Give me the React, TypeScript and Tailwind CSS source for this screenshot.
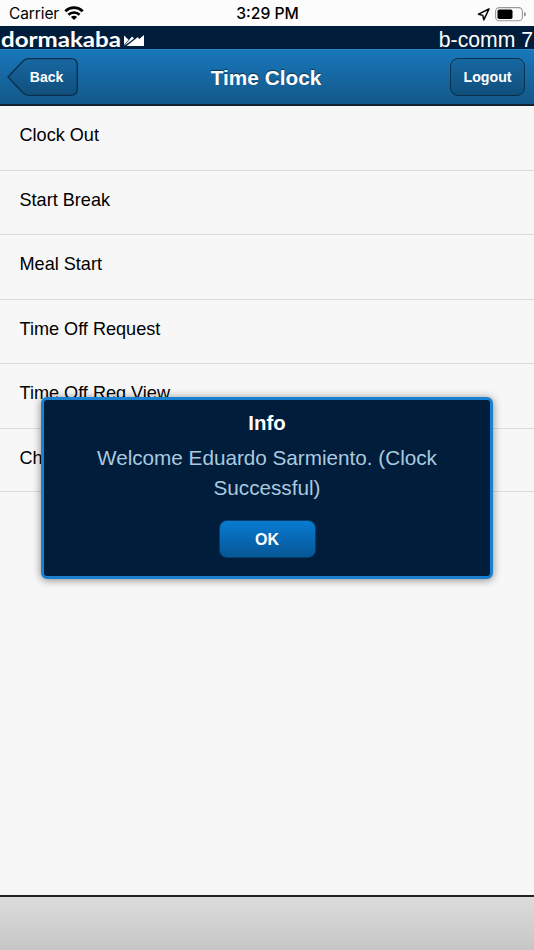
const items = [
  'Clock Out',
  'Start Break',
  'Meal Start',
  'Time Off Request',
  'Time Off Req View',
  'Ch',
];

function StatusBar() {
  return (
    <div className="grid h-[26px] shrink-0 grid-cols-3 items-center bg-[#fcfcfc] pt-0.5 pr-2 pl-[9px] font-['Inter','Liberation_Sans',sans-serif] text-black">
      <div className="flex items-center gap-[5px]">
        <span className="text-[15.5px] leading-none tracking-[-0.1px]">Carrier</span>
        <svg viewBox="0 0 20 14" className="-mt-0.5 h-3.5 w-5" fill="none" stroke="currentColor">
          <path d="M1.3 5.2a12.6 12.6 0 0 1 17.4 0" strokeWidth="2.8" />
          <path d="M4.4 8.8a8 8 0 0 1 11.2 0" strokeWidth="2.6" />
          <path d="M10 14 6.9 11.1a4.4 4.4 0 0 1 6.2 0z" fill="currentColor" stroke="none" />
        </svg>
      </div>
      <span className="text-center text-[15.7px] leading-none font-medium">3:29 PM</span>
      <div className="flex items-center justify-end gap-[5px]">
        <svg viewBox="0 0 13 13" className="size-[13px]" fill="none" stroke="currentColor" strokeWidth="1.5" strokeLinejoin="round">
          <path d="M12 1 1.5 6.2l4.3 1.2 1 4.4z" />
        </svg>
        <svg viewBox="0 0 31 15" className="h-[15px] w-[31px]">
          <rect x="0.6" y="0.6" width="26.8" height="13.2" rx="3.8" fill="none" stroke="#999" strokeWidth="1.1" />
          <rect x="2.5" y="2.5" width="15" height="9.5" rx="1.8" fill="#000" />
          <path d="M29 4.8q2 .8 2 2.4t-2 2.4z" fill="#999" />
        </svg>
      </div>
    </div>
  );
}

function BrandBar() {
  return (
    <div className="flex h-[23px] shrink-0 items-center justify-between bg-[#001e3c] pr-px text-white">
      <svg viewBox="0 0 146 23" className="h-[23px] w-[146px]" fill="currentColor">
        <text x="1" y="20.5" textLength="120" lengthAdjust="spacingAndGlyphs" className="font-['Lato',sans-serif] text-[21px] font-bold">
          dormakaba
        </text>
        <path d="M124 9.5l4.5 4.3-4.5 5.2zM124 20l8-9.5 2 2zM126.500 20l11.500-9 1 2.200L144 9v11z" />
      </svg>
      <span className="pt-1 text-[21.2px] leading-none">b-comm 7</span>
    </div>
  );
}

function Header() {
  return (
    <header className="grid h-[57px] shrink-0 grid-cols-3 items-center border-t border-b-2 border-t-[#2986c8] border-b-[#15222e] bg-linear-to-b from-[#1877bb] to-[#135889] pr-[9px] pl-[7px] font-bold text-white [text-shadow:0_-1px_1px_#0008]">
      <button className="relative h-[38px] w-[71px] pl-2 text-[14px]">
        <svg viewBox="0 0 71 38" className="absolute inset-0 h-[38px] w-[71px]">
          <defs>
            <linearGradient id="back" x1="0" y1="0" x2="0" y2="1">
              <stop offset="0" stopColor="#1767a2" />
              <stop offset="1" stopColor="#104f7c" />
            </linearGradient>
          </defs>
          <path
            d="M1 19 16 3Q18.5.7 22 .7h42q6.3 0 6.3 6.3v24q0 6.3-6.3 6.3H22q-3.5 0-6-2.3z"
            fill="url(#back)"
            stroke="#0b2e4a"
            strokeWidth="1.3"
          />
        </svg>
        <span className="relative">Back</span>
      </button>
      <h1 className="pt-0.5 text-center text-[20.8px]">Time Clock</h1>
      <button className="h-[38px] w-[75px] justify-self-end rounded-[8px] border-[1.5px] border-[#0b2e4a] bg-linear-to-b from-[#1767a2] to-[#104f7c] pt-px text-[14.2px]">
        Logout
      </button>
    </header>
  );
}

function InfoDialog() {
  return (
    <div className="absolute top-[397px] left-[41px] flex h-[182px] w-[452px] flex-col items-center rounded-md border-3 border-[#1a80d0] bg-[#001e3c] text-center shadow-[0_1px_9px_#0007]">
      <h2 className="mt-[9px] text-[20.4px] leading-7 font-bold text-white">Info</h2>
      <p className="mt-1.5 w-[370px] text-[20.7px] leading-[30px] text-[#abc9df]">
        Welcome Eduardo Sarmiento. (Clock Successful)
      </p>
      <button className="mt-[17px] h-[38px] w-[97px] rounded-[8px] border border-[#063d6c] bg-linear-to-b from-[#087bd2] to-[#065796] pt-0.5 text-base font-bold text-white">
        OK
      </button>
    </div>
  );
}

export default function App() {
  return (
    <div className="relative flex h-[950px] w-[534px] flex-col overflow-hidden bg-[#f7f7f7] font-['Liberation_Sans',Arial,sans-serif]">
      <StatusBar />
      <BrandBar />
      <Header />
      <ul className="grow text-[18.1px] text-black">
        {items.map((item) => (
          <li key={item} className="h-[64.5px] border-b border-[#dcdcdc] pt-[17px] pl-[19.5px] leading-6 last:h-[63.5px]">
            {item}
          </li>
        ))}
      </ul>
      <footer className="h-[55px] shrink-0 border-t-2 border-[#222] bg-linear-to-b from-[#dcdcdc] to-[#c6c6c6]" />
      <InfoDialog />
    </div>
  );
}
